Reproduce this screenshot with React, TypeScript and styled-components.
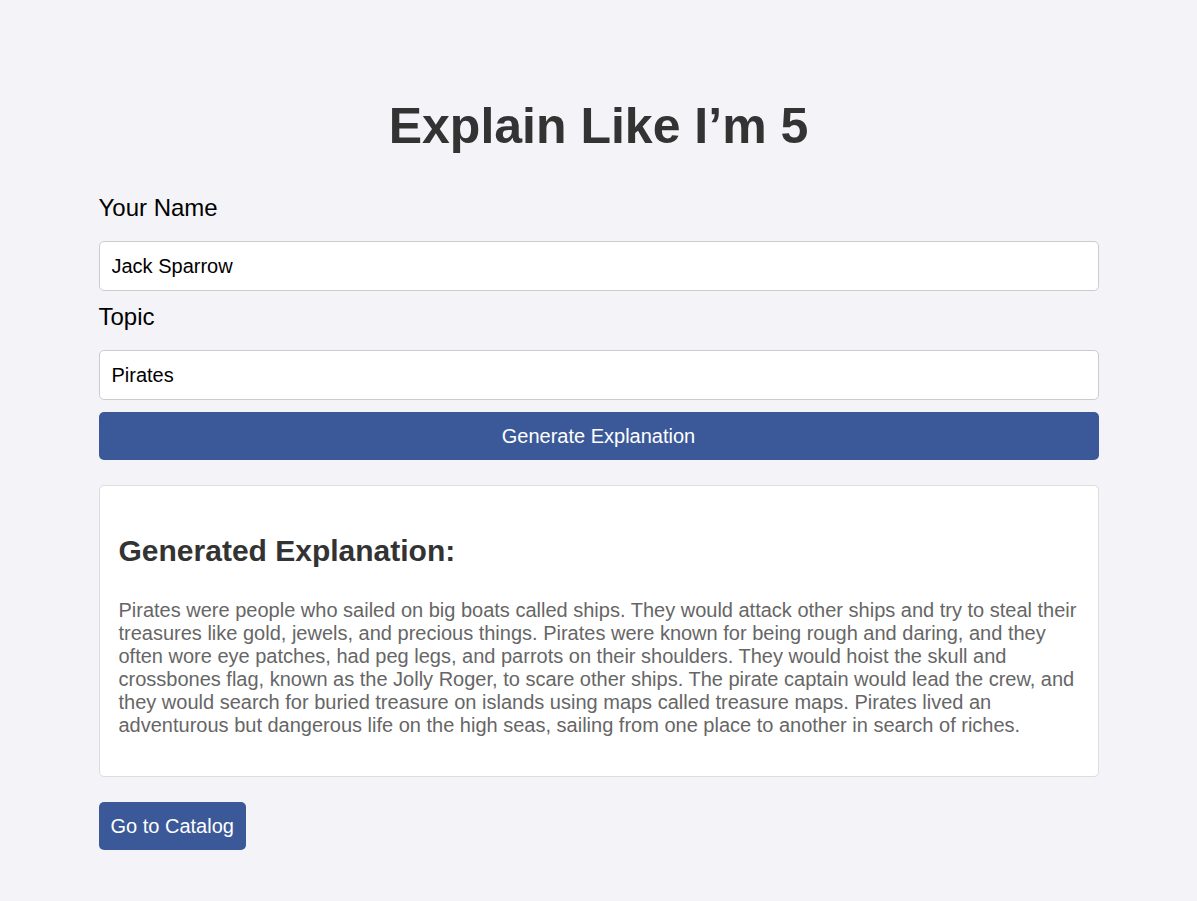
import React from "react";
import styled, { createGlobalStyle } from "styled-components";

const Global = createGlobalStyle`
  html, body {
    margin: 0;
    padding: 0;
    background: #f4f4f8;
  }
  body {
    font-family: "Liberation Sans", Arial, sans-serif;
    font-size: 20px;
    color: #000;
  }
  * { box-sizing: border-box; }
`;

const Page = styled.main`
  max-width: 1000px;
  margin: 0 auto;
  padding: 97px 0 51px;
  display: flex;
  flex-direction: column;
`;

const Title = styled.h1`
  margin: 0 0 27px;
  font-size: 50px;
  font-weight: 700;
  line-height: normal;
  color: #333;
  text-align: center;
`;

const Form = styled.form`
  display: flex;
  flex-direction: column;
`;

const Label = styled.label`
  display: block;
  margin: 12px 0 19px;
  font-size: 24px;
  line-height: normal;
  color: #000;
`;

const Input = styled.input`
  display: block;
  width: 100%;
  height: 50px;
  padding: 0 12px;
  font-family: "Liberation Sans", Arial, sans-serif;
  font-size: 20px;
  color: #000;
  background: #fff;
  border: 1px solid #ccc;
  border-radius: 5px;
  outline: none;
`;

const Button = styled.button<{ $full?: boolean }>`
  display: block;
  width: ${(p) => (p.$full ? "100%" : "auto")};
  align-self: ${(p) => (p.$full ? "stretch" : "flex-start")};
  height: 48px;
  padding: 0 12px;
  font-family: "Liberation Sans", Arial, sans-serif;
  font-size: 20px;
  line-height: 23px;
  color: #fff;
  background: #3b5998;
  border: none;
  border-radius: 5px;
  cursor: pointer;
`;

const SubmitButton = styled(Button)`
  margin-top: 12px;
`;

const Card = styled.section`
  margin: 25px 0;
  padding: 20px 19px 18px;
  background: #fff;
  border: 1px solid #ddd;
  border-radius: 5px;
`;

const CardTitle = styled.h2`
  margin: 28px 0 31px;
  font-size: 30px;
  font-weight: 700;
  line-height: normal;
  color: #333;
`;

const Text = styled.p`
  margin: 0 0 21px;
  font-size: 20px;
  line-height: 23px;
  color: #666;
`;

export default function App() {
  return (
    <>
      <Global />
      <Page>
        <Title>Explain Like I’m 5</Title>
        <Form onSubmit={(e) => e.preventDefault()}>
          <Label htmlFor="name">Your Name</Label>
          <Input id="name" defaultValue="Jack Sparrow" />
          <Label htmlFor="topic">Topic</Label>
          <Input id="topic" defaultValue="Pirates" />
          <SubmitButton type="submit" $full>
            Generate Explanation
          </SubmitButton>
        </Form>
        <Card>
          <CardTitle>Generated Explanation:</CardTitle>
          <Text>
            Pirates were people who sailed on big boats called ships. They would attack other ships and try to steal their
            treasures like gold, jewels, and precious things. Pirates were known for being rough and daring, and they
            often wore eye patches, had peg legs, and parrots on their shoulders. They would hoist the skull and
            crossbones flag, known as the Jolly Roger, to scare other ships. The pirate captain would lead the crew, and
            they would search for buried treasure on islands using maps called treasure maps. Pirates lived an
            adventurous but dangerous life on the high seas, sailing from one place to another in search of riches.
          </Text>
        </Card>
        <Button type="button">Go to Catalog</Button>
      </Page>
    </>
  );
}
